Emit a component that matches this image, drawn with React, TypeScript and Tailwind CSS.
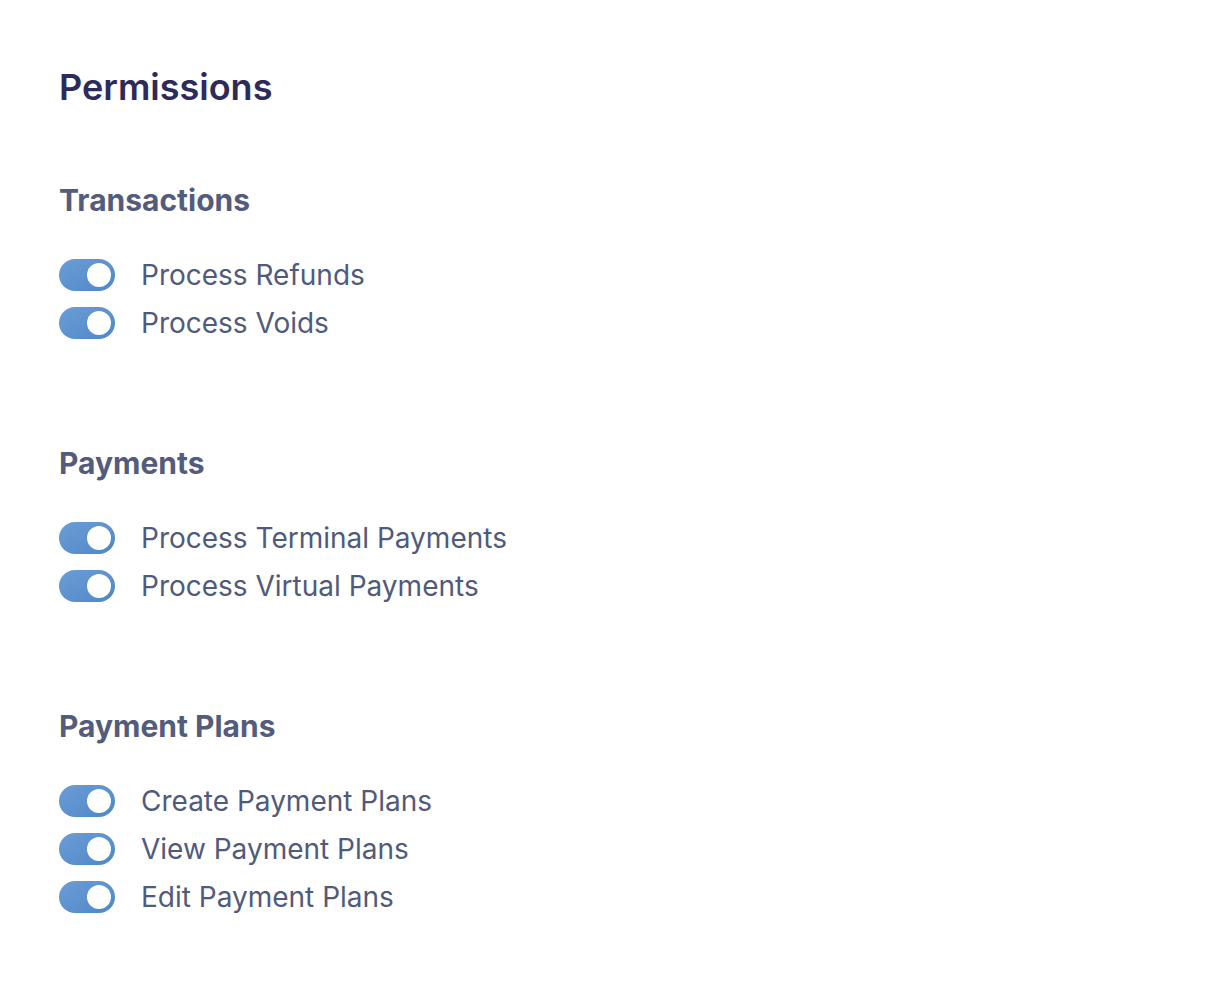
const sections = [
  { title: 'Transactions', items: ['Process Refunds', 'Process Voids'] },
  { title: 'Payments', items: ['Process Terminal Payments', 'Process Virtual Payments'] },
  { title: 'Payment Plans', items: ['Create Payment Plans', 'View Payment Plans', 'Edit Payment Plans'] },
];

function Toggle() {
  return (
    <div className="flex h-8 w-14 shrink-0 items-center justify-end rounded-full bg-gradient-to-br from-[#6c9dd6] to-[#4d88c8] pr-1">
      <div className="h-6 w-6 rounded-full bg-white" />
    </div>
  );
}

export default function App() {
  return (
    <div className="min-h-screen bg-white px-[59px] pt-[64px] font-['Inter','Liberation_Sans',sans-serif]">
      <h1 className="text-[36px] font-semibold leading-[46px] text-[#2d2b5a]">Permissions</h1>

      <div className="mt-[71px] flex flex-col gap-[105px]">
        {sections.map((section) => (
          <div key={section.title}>
            <h2 className="text-[30px] font-bold leading-[38px] text-[#535c7c]">{section.title}</h2>
            <div className="mt-10 flex flex-col gap-4">
              {section.items.map((item) => (
                <div key={item} className="flex items-center gap-[26px]">
                  <Toggle />
                  <span className="text-[28px] leading-8 text-[#505a7c]">{item}</span>
                </div>
              ))}
            </div>
          </div>
        ))}
      </div>
    </div>
  );
}
